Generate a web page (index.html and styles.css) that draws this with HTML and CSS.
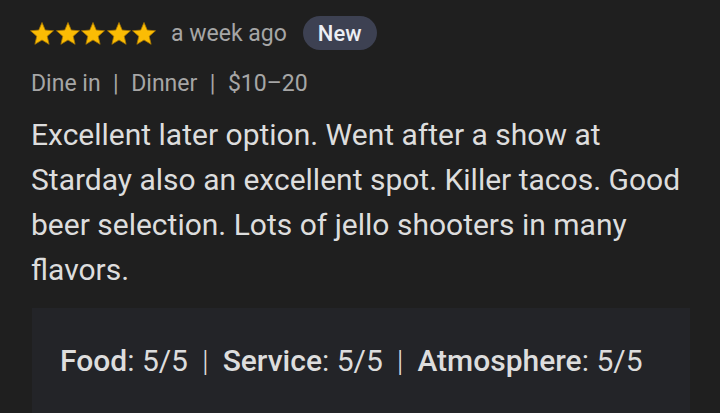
FILE: index.html
```html
<!DOCTYPE html>
<html>
<head>
<meta charset="utf-8">
<link rel="stylesheet" href="styles.css">
</head>
<body>
<div class="review">
  <div class="head">
    <div class="stars">
      <svg class="star" viewBox="1.6 1.6 20.8 20"><path d="M12 17.27L18.18 21l-1.64-7.03L22 9.24l-7.19-.61L12 2 9.19 8.63 2 9.24l5.46 4.73L5.82 21z"/></svg>
      <svg class="star" viewBox="1.6 1.6 20.8 20"><path d="M12 17.27L18.18 21l-1.64-7.03L22 9.24l-7.19-.61L12 2 9.19 8.63 2 9.24l5.46 4.73L5.82 21z"/></svg>
      <svg class="star" viewBox="1.6 1.6 20.8 20"><path d="M12 17.27L18.18 21l-1.64-7.03L22 9.24l-7.19-.61L12 2 9.19 8.63 2 9.24l5.46 4.73L5.82 21z"/></svg>
      <svg class="star" viewBox="1.6 1.6 20.8 20"><path d="M12 17.27L18.18 21l-1.64-7.03L22 9.24l-7.19-.61L12 2 9.19 8.63 2 9.24l5.46 4.73L5.82 21z"/></svg>
      <svg class="star" viewBox="1.6 1.6 20.8 20"><path d="M12 17.27L18.18 21l-1.64-7.03L22 9.24l-7.19-.61L12 2 9.19 8.63 2 9.24l5.46 4.73L5.82 21z"/></svg>
    </div>
    <span class="time">a week ago</span>
    <span class="badge">New</span>
  </div>
  <div class="meta"><span>Dine in</span><span class="sep">|</span><span>Dinner</span><span class="sep">|</span><span>$10–20</span></div>
  <p class="text">Excellent later option. Went after a show at Starday also an excellent spot. Killer tacos. Good beer selection. Lots of jello shooters in many flavors.</p>
  <div class="box">
    <span><b>Food</b>: 5/5</span><span class="sep">|</span><span><b>Service</b>: 5/5</span><span class="sep">|</span><span><b>Atmosphere</b>: 5/5</span>
  </div>
</div>
</body>
</html>
```
FILE: styles.css
```css
html, body {
  margin: 0;
  background: #1f1f1f;
  height: 100%;
  overflow: hidden;
}
body {
  font-family: Roboto, "Noto Sans", sans-serif;
  color: #e3e3e3;
}
.review {
  padding: 14px 30px 0 31px;
}
.head {
  display: flex;
  align-items: center;
  height: 38px;
}
.stars {
  display: flex;
  gap: 1.5px;
  margin-left: -1px;
}
.star {
  width: 24px;
  height: 23px;
  fill: #fbbc04;
  stroke: #a87800;
  stroke-width: 0.7;
}
.time {
  margin-left: 15px;
  font-size: 23px;
  color: #a6a6a6;
}
.badge {
  margin-left: 16px;
  height: 34px;
  padding: 0 15px;
  border-radius: 17px;
  background: #3d4152;
  color: #eceef4;
  font-weight: 500;
  font-size: 22px;
  display: flex;
  align-items: center;
}
.meta {
  margin-top: 17px;
  font-size: 23px;
  color: #a6a6a6;
  line-height: 30px;
  display: flex;
  gap: 12.5px;
}
.text {
  margin: 13px 0 0;
  font-size: 30px;
  line-height: 45px;
  color: #dddddd;
}
.box {
  margin-top: 16px;
  margin-left: 1px;
  background: #232428;
  height: 120px;
  padding: 35px 28px 0;
  box-sizing: border-box;
  display: flex;
  align-items: flex-start;
  font-size: 30px;
  line-height: 35px;
  color: #dddddd;
  gap: 14px;
}
.box b {
  font-weight: 500;
}
.box .sep {
  font-weight: 300;
}
```
